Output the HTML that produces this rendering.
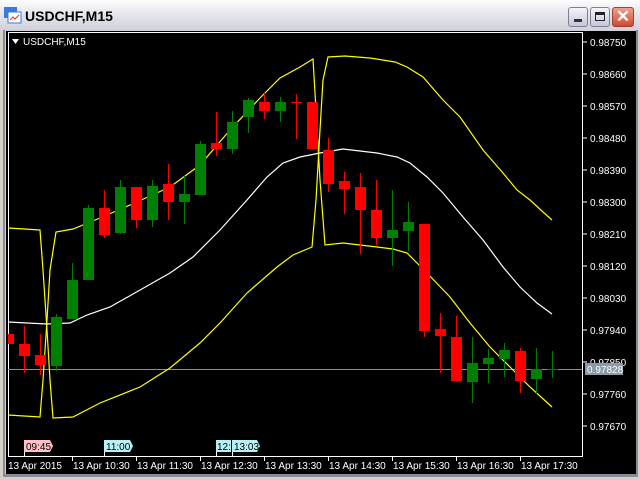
<!DOCTYPE html>
<html><head><style>
body{margin:0;width:640px;height:480px;overflow:hidden;background:#d4d0c8;font-family:"Liberation Sans",sans-serif}
.t{position:absolute;left:0;top:0;width:640px;height:31px;background:linear-gradient(#fdfdfd,#e8e8ee 40%,#cfd0d8);}
.btn{position:absolute;top:7px;width:20px;height:20px;border-radius:3px;border:1px solid #7d7f95;box-sizing:border-box;background:linear-gradient(#f4f4fa,#c4c6d6)}
</style></head><body>
<div class="t"></div>
<svg style="position:absolute;left:4px;top:7px" width="18" height="17"><rect x="0" y="0" width="13" height="11" fill="#3a7ad8"/><rect x="4" y="5" width="13" height="11" fill="#fff" stroke="#3a7ad8"/><polyline points="6,13 9,10 11,12 15,8" stroke="#e03020" fill="none"/></svg>
<div style="position:absolute;left:25px;top:8px;font-size:14px;font-weight:bold;color:#000">USDCHF,M15</div>
<div class="btn" style="left:568px"><div style="position:absolute;left:5px;top:11px;width:8px;height:3px;background:#333"></div></div>
<div class="btn" style="left:590px"><div style="position:absolute;left:4px;top:4px;width:10px;height:9px;border:1px solid #222;border-top-width:3px;box-sizing:border-box"></div></div>
<div class="btn" style="left:612px;width:22px;background:linear-gradient(#f0a090,#d04a30);border-color:#a04030;color:#fff;font-size:17px;line-height:18px;text-align:center;font-weight:bold">✕</div>
<svg style="position:absolute;left:0;top:0" width="640" height="480" font-family="Liberation Sans,sans-serif" font-size="10">
<rect x="6" y="31" width="631" height="443" fill="#000"/>
<rect x="3" y="30" width="2" height="446" fill="#8a8a98"/>
<rect x="636" y="30" width="2" height="446" fill="#8a8a98"/>
<rect x="3" y="474" width="635" height="3" fill="#8a8a98"/>
<rect x="8.5" y="32.5" width="574" height="424" fill="none" stroke="#fff"/>
<line x1="8" y1="369.5" x2="582" y2="369.5" stroke="#8a9098"/>
<g fill="none" stroke-width="1.2">
<polyline stroke="#ff0" points="8,228 40,230 43,270 47,330 50,380 53,418 73,417 100,403 140,387 170,368 200,343 220,323 247,293 277,267 293,255 312,247 316,200 320,130 323,80 328,57 345,56 370,58 395,62 407,67 423,77 443,100 460,117 483,150 503,173 517,190 530,200 543,212 552,220"/>
<polyline stroke="#ff0" points="8,415 40,417 43,380 47,320 50,270 56,232 73,229 100,218 130,205 170,187 200,165 230,130 260,98 280,78 300,67 313,59 316,110 320,180 325,245 343,243 377,247 393,249 407,253 427,273 450,297 470,323 490,347 510,367 530,387 552,407"/>
<polyline stroke="#fff" points="8,322 47,324 70,323 87,315 110,307 133,294 170,273 193,257 220,230 247,200 267,177 283,163 300,157 320,153 343,149 377,153 397,157 410,163 427,177 443,193 463,217 483,240 503,267 520,287 537,303 552,314"/>
</g>
<g id="c"></g>
<g fill="#fff">
<text x="590" y="46">0.98750</text><text x="590" y="78">0.98660</text><text x="590" y="110">0.98570</text><text x="590" y="142">0.98480</text><text x="590" y="174">0.98390</text><text x="590" y="206">0.98300</text><text x="590" y="238">0.98210</text><text x="590" y="270">0.98120</text><text x="590" y="302">0.98030</text><text x="590" y="334">0.97940</text><text x="590" y="366">0.97850</text><text x="590" y="398">0.97760</text><text x="590" y="430">0.97670</text>
</g>
<g stroke="#fff"><line x1="583" y1="42" x2="587" y2="42"/><line x1="583" y1="74" x2="587" y2="74"/><line x1="583" y1="106" x2="587" y2="106"/><line x1="583" y1="138" x2="587" y2="138"/><line x1="583" y1="170" x2="587" y2="170"/><line x1="583" y1="202" x2="587" y2="202"/><line x1="583" y1="234" x2="587" y2="234"/><line x1="583" y1="266" x2="587" y2="266"/><line x1="583" y1="298" x2="587" y2="298"/><line x1="583" y1="330" x2="587" y2="330"/><line x1="583" y1="362" x2="587" y2="362"/><line x1="583" y1="394" x2="587" y2="394"/><line x1="583" y1="426" x2="587" y2="426"/>
<line x1="72.5" y1="457" x2="72.5" y2="461"/><line x1="136.5" y1="457" x2="136.5" y2="461"/><line x1="200.5" y1="457" x2="200.5" y2="461"/><line x1="264.5" y1="457" x2="264.5" y2="461"/><line x1="328.5" y1="457" x2="328.5" y2="461"/><line x1="392.5" y1="457" x2="392.5" y2="461"/><line x1="456.5" y1="457" x2="456.5" y2="461"/><line x1="520.5" y1="457" x2="520.5" y2="461"/>
<line x1="24.5" y1="452" x2="24.5" y2="456"/><line x1="104.5" y1="452" x2="104.5" y2="456"/><line x1="216.5" y1="452" x2="216.5" y2="456"/><line x1="232.5" y1="452" x2="232.5" y2="456"/></g>
<rect x="585" y="363" width="38" height="12" fill="#8a9aa8"/><text x="587" y="373" fill="#fff">0.97828</text>
<g fill="#fff"><text x="8" y="469">13 Apr 2015</text><text x="73" y="469">13 Apr 10:30</text><text x="137" y="469">13 Apr 11:30</text><text x="201" y="469">13 Apr 12:30</text><text x="265" y="469">13 Apr 13:30</text><text x="329" y="469">13 Apr 14:30</text><text x="393" y="469">13 Apr 15:30</text><text x="457" y="469">13 Apr 16:30</text><text x="521" y="469">13 Apr 17:30</text></g>
<polygon points="24,440 50,440 53,446 50,452 24,452" fill="#ffc0c8"/><text x="26" y="450" fill="#000">09:45</text>
<polygon points="104,440 130,440 133,446 130,452 104,452" fill="#b8f0f4"/><text x="106" y="450" fill="#000">11:00</text>
<rect x="216" y="440" width="15" height="12" fill="#b8f0f4"/><text x="217" y="450" fill="#000">12:</text>
<polygon points="232,440 257,440 260,446 257,452 232,452" fill="#b8f0f4"/><text x="234" y="450" fill="#000">13:03</text>
<polygon points="12,39 19,39 15.5,44" fill="#fff"/><text x="23" y="45" fill="#fff">USDCHF,M15</text>
</svg>
<script>
var d=[[8.5,'r',334,344,334,344],[24.5,'r',344,356,326,373],[40.5,'r',355,365,334,375],[56.5,'g',317,366,314,371],[72.5,'g',280,319,263,319],[88.5,'g',208,280,205,280],[104.5,'r',208,235,190,238],[120.5,'g',187,233,180,234],[136.5,'r',187,220,187,228],[152.5,'g',186,220,180,227],[168.5,'r',184,202,164,220],[184.5,'g',194,202,175,224],[200.5,'g',144,195,141,195],[216.5,'r',143,149,112,156],[232.5,'g',122,149,111,154],[248.5,'g',100,117,98,133],[264.5,'r',102,111,93,119],[280.5,'g',102,111,97,122],[296.5,'r',102,103,94,139],[312.5,'r',102,149,102,149],[328.5,'r',150,184,138,192],[344.5,'r',181,189,172,214],[360.5,'r',187,210,173,254],[376.5,'r',210,238,180,245],[392.5,'g',230,238,190,266],[408.5,'g',222,231,202,251],[424.5,'r',224,331,224,337],[440.5,'r',329,336,313,373],[456.5,'r',337,381,316,382],[472.5,'g',363,382,337,403],[488.5,'g',358,364,349,383],[504.5,'g',350,359,343,377],[520.5,'r',351,381,348,393],[536.5,'g',369,379,348,394],[552.5,'g',369,370,351,378]];
var s='';d.forEach(function(c){var col=c[1]=='r'?'#f00':'#008000';var x0=Math.max(c[0]-5.5,9);
s+='<line x1="'+c[0]+'" y1="'+c[4]+'" x2="'+c[0]+'" y2="'+c[5]+'" stroke="'+col+'"/>';
s+='<rect x="'+x0+'" y="'+c[2]+'" width="'+(c[0]+5.5-x0)+'" height="'+Math.max(c[3]-c[2],1)+'" fill="'+col+'"/>';});
document.getElementById('c').innerHTML=s;
</script>
</body></html>
